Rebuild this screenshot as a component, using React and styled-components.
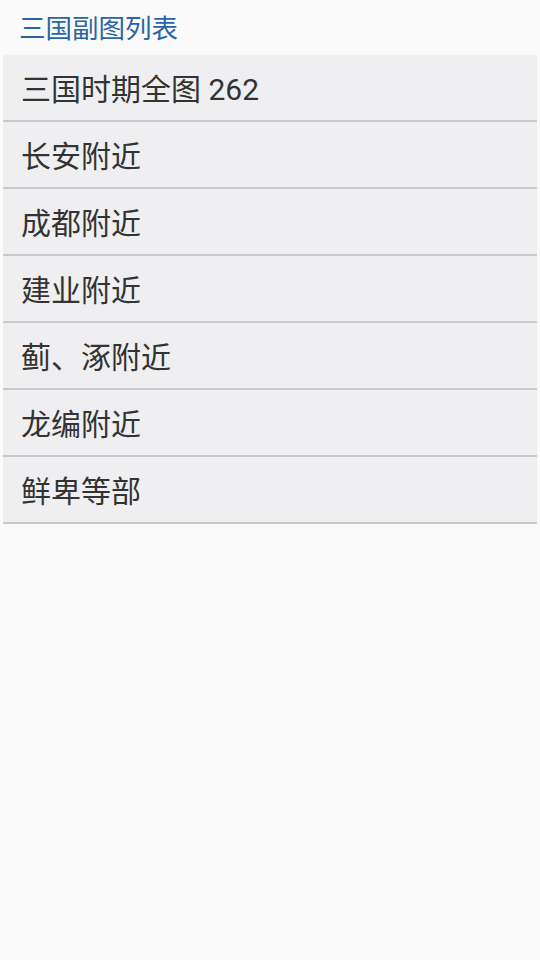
import React from 'react';
import styled, { createGlobalStyle } from 'styled-components';

const GlobalStyle = createGlobalStyle`
  html, body {
    margin: 0;
    padding: 0;
    background: #fafafa;
    font-family: Roboto, "Noto Sans CJK SC", sans-serif;
  }
`;

const maps = [
  '三国时期全图 262',
  '长安附近',
  '成都附近',
  '建业附近',
  '蓟、涿附近',
  '龙编附近',
  '鲜卑等部',
];

const App = () => {
  return (
    <Page>
      <GlobalStyle />
      <Title>三国副图列表</Title>
      <List>
        {maps.map((name) => (
          <Item key={name}>{name}</Item>
        ))}
      </List>
    </Page>
  );
};

export default App;

const Page = styled.div`
  min-height: 960px;
  background: #fafafa;
`;

const Title = styled.h1`
  margin: 0;
  height: 53px;
  padding: 0 0 2px 19px;
  display: flex;
  align-items: center;
  font-size: 26.5px;
  font-weight: 400;
  color: #2b64a6;
`;

const List = styled.ul`
  list-style: none;
  margin: 0 3px;
  padding: 0;
`;

const Item = styled.li`
  height: 63px;
  display: flex;
  align-items: center;
  padding: 0 0 2px 18px;
  background: #efeff1;
  border-bottom: 2px solid #c9c9cc;
  font-size: 30px;
  color: #333333;
`;
